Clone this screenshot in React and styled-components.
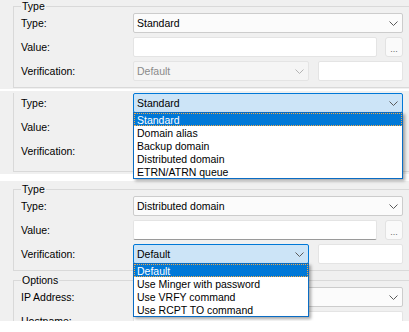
import React from "react";
import styled, { createGlobalStyle, css } from "styled-components";

const GlobalStyle = createGlobalStyle`
    html, body {
        margin: 0;
        padding: 0;
        background: #fff;
    }
    body {
        font-family: "Liberation Sans", Arial, sans-serif;
        font-size: 10.5px;
        color: #000;
    }
`;

const Page = styled.div`
    width: 409px;
    display: flex;
    flex-direction: column;
`;

// one cropped dialog screenshot
const Shot = styled.div`
    position: relative;
    box-sizing: border-box;
    height: ${props => props.h}px;
    margin-top: ${props => props.gap || 0}px;
    padding-top: ${props => props.pad || 0}px;
    background: #f0f0f0;
    ${props =>
        props.clip &&
        css`
            overflow: hidden;
        `}
`;

const Group = styled.fieldset`
    margin: ${props => props.top || 0}px 0 0 13px;
    padding: 0 6px ${props => props.bottom || 6}px 7px;
    border: 1px solid #d9d9d9;
    border-right: none;
    min-width: 0;
    ${props =>
        props.open &&
        css`
            border-top: none;
        `}
`;

const Legend = styled.legend`
    padding: 0 1px;
    margin: 0;
    line-height: 13px;
`;

const Rows = styled.div`
    display: grid;
    grid-template-columns: 112px minmax(0, 1fr);
    grid-auto-rows: 20px;
    row-gap: 4px;
    align-items: center;
`;

const Label = styled.div`
    line-height: 13px;
    white-space: nowrap;
`;

const Field = styled.div`
    display: flex;
    min-width: 0;
    height: 20px;
    gap: ${props => props.gap || 8}px;
`;

const Combo = styled.div`
    position: relative;
    box-sizing: border-box;
    display: flex;
    align-items: center;
    height: 20px;
    width: ${props => (props.w ? `${props.w}px` : "auto")};
    flex: ${props => (props.w ? "none" : "1")};
    padding: 0 4px 0 3px;
    border: 1px solid #cccccc;
    border-radius: 2px;
    background: #fbfbfb;
    white-space: nowrap;
    ${props =>
        props.focused &&
        css`
            background: #cce4f7;
            border-color: #0078d7;
        `}
    ${props =>
        props.disabled &&
        css`
            background: #f5f5f5;
            border-color: #e4e4e4;
            color: #8a8a8a;
        `}
`;

const ComboText = styled.span`
    flex: 1;
    line-height: 13px;
`;

const TextBox = styled.input`
    flex: 1;
    width: 0;
    min-width: 0;
    box-sizing: border-box;
    height: 20px;
    margin: 0;
    padding: 0 3px;
    border: 1px solid #e4e4e4;
    border-bottom-color: ${props => (props.dark ? "#9a9a9a" : "#e4e4e4")};
    border-radius: 2px;
    background: #fff;
    outline: none;
    font: inherit;
`;

const Browse = styled.button`
    flex: none;
    box-sizing: border-box;
    width: 18px;
    height: 20px;
    margin: 0;
    padding: 4px 0 0;
    border: 1px solid #e2e2e2;
    border-radius: 3px;
    background: #fafafa;
    color: #6a6a6a;
    font: inherit;
    font-size: 9px;
    line-height: 12px;
`;

const List = styled.ul`
    position: absolute;
    top: 100%;
    left: -1px;
    right: -1px;
    z-index: 10;
    margin: 0;
    padding: 0;
    list-style: none;
    background: #fff;
    color: #000;
    border: 1px solid #0a6cc4;
    box-shadow: 2px 2px 3px rgba(0, 0, 0, 0.35);
`;

const Item = styled.li`
    box-sizing: border-box;
    height: 13px;
    padding-left: 3px;
    line-height: 14px;
    white-space: nowrap;
    ${props =>
        props.selected &&
        css`
            background: #0078d7;
            color: #fff;
            outline: 1px dotted #f0a848;
            outline-offset: -1px;
        `}
`;

function Chevron({ light }) {
    return (
        <svg width="9" height="5" viewBox="0 0 9 5">
            <polyline
                points="0.5,0.5 4.5,4.5 8.5,0.5"
                fill="none"
                stroke={light ? "#b4b4b4" : "#5a5a5a"}
                strokeWidth="1"
            />
        </svg>
    );
}

function Select({ value, w, focused, disabled, items, selected }) {
    return (
        <Combo w={w} focused={focused} disabled={disabled}>
            <ComboText>{value}</ComboText>
            <Chevron light={disabled} />
            {items && (
                <List>
                    {items.map(item => (
                        <Item key={item} selected={item === selected}>
                            {item}
                        </Item>
                    ))}
                </List>
            )}
        </Combo>
    );
}

const typeItems = ["Standard", "Domain alias", "Backup domain", "Distributed domain", "ETRN/ATRN queue"];
const verifyItems = ["Default", "Use Minger with password", "Use VRFY command", "Use RCPT TO command"];

export default function App() {
    return (
        <Page>
            <GlobalStyle />

            <Shot h={89}>
                <Group>
                    <Legend>Type</Legend>
                    <Rows>
                        <Label>Type:</Label>
                        <Select value="Standard" />
                        <Label>Value:</Label>
                        <Field>
                            <TextBox readOnly />
                            <Browse>...</Browse>
                        </Field>
                        <Label>Verification:</Label>
                        <Field gap={9}>
                            <Select value="Default" w={176} disabled />
                            <TextBox readOnly />
                        </Field>
                    </Rows>
                </Group>
            </Shot>

            <Shot h={83} gap={2} pad={2}>
                <Group open bottom={10}>
                    <Rows>
                        <Label>Type:</Label>
                        <Select value="Standard" focused items={typeItems} selected="Standard" />
                        <Label>Value:</Label>
                        <Field>
                            <TextBox readOnly />
                            <Browse />
                        </Field>
                        <Label>Verification:</Label>
                        <Field gap={9}>
                            <Select value="" w={176} disabled />
                            <TextBox readOnly />
                        </Field>
                    </Rows>
                </Group>
            </Shot>

            <Shot h={140} gap={7} pad={2} clip>
                <Group>
                    <Legend>Type</Legend>
                    <Rows>
                        <Label>Type:</Label>
                        <Select value="Distributed domain" />
                        <Label>Value:</Label>
                        <Field>
                            <TextBox readOnly dark />
                            <Browse>...</Browse>
                        </Field>
                        <Label>Verification:</Label>
                        <Field gap={9}>
                            <Select value="Default" w={176} focused items={verifyItems} selected="Default" />
                            <TextBox readOnly />
                        </Field>
                    </Rows>
                </Group>
                <Group top={3}>
                    <Legend>Options</Legend>
                    <Rows>
                        <Label>IP Address:</Label>
                        <Select value="" />
                        <Label>Hostname:</Label>
                        <Field>
                            <TextBox readOnly dark />
                        </Field>
                    </Rows>
                </Group>
            </Shot>
        </Page>
    );
}
